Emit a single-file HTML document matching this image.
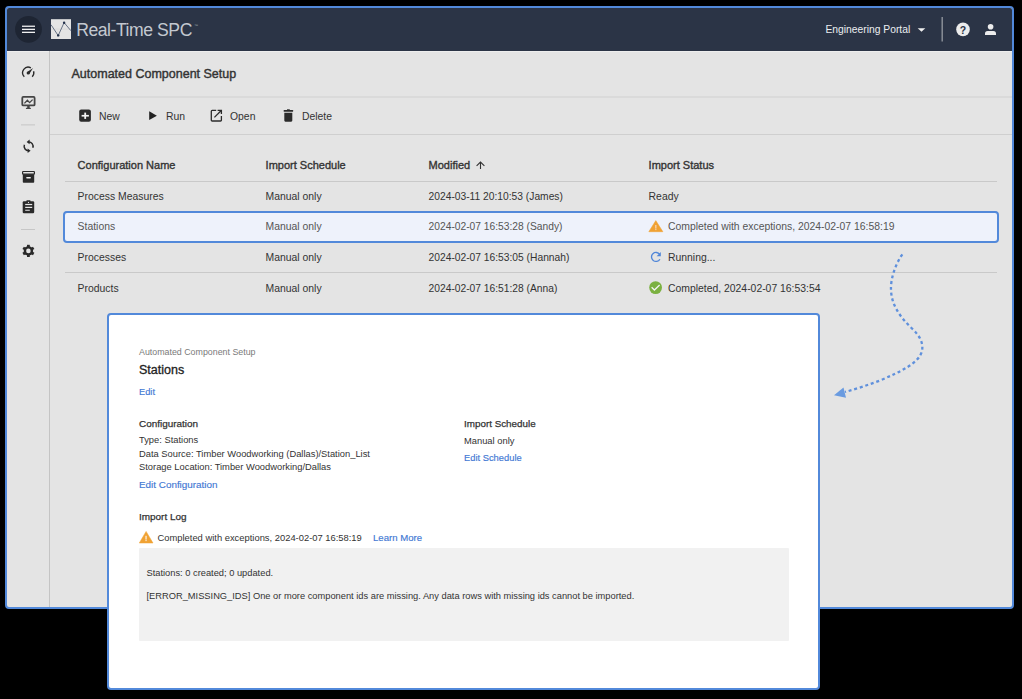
<!DOCTYPE html>
<html><head><meta charset="utf-8">
<style>
*{box-sizing:border-box;margin:0;padding:0}
html,body{width:1022px;height:699px;overflow:hidden;background:#000;font-family:"Liberation Sans",sans-serif;color:#333}
.a{position:absolute;white-space:nowrap}
svg.a{overflow:visible}
</style></head><body>
<div class="a" style="left:5px;top:6px;width:1009px;height:603px;background:#e4e4e4;border:2px solid #5289da;border-radius:4px"></div>
<div class="a" style="left:7px;top:8px;width:1005px;height:43px;background:#2b3446;border-radius:2px 2px 0 0"></div>
<svg class="a" style="left:0;top:0" width="80" height="50"><circle cx="28.5" cy="29.3" r="13.4" fill="#1e2533"/><rect x="22" y="25.6" width="13" height="1.3" fill="#f0f0f0"/><rect x="22" y="28.7" width="13" height="1.3" fill="#f0f0f0"/><rect x="22" y="31.7" width="13" height="1.3" fill="#f0f0f0"/><rect x="51" y="19.2" width="20" height="19.8" fill="#e4e4e4"/><line x1="51" y1="29.1" x2="71" y2="29.1" stroke="#d2d2d2" stroke-width="0.6"/><polyline points="51,24.7 58.2,35.6 64.1,22.6 71,30.8" fill="none" stroke="#46546c" stroke-width="0.8"/><circle cx="58.2" cy="35.4" r="1.2" fill="#23314a"/><circle cx="64.1" cy="22.8" r="1.2" fill="#23314a"/></svg>
<div class="a" style="left:76.20px;top:19.70px;font-size:17.6px;line-height:20px;font-weight:400;color:#c3c8d0;letter-spacing:-0.45px">Real-Time SPC</div>
<div class="a" style="left:194.00px;top:15.61px;font-size:4px;line-height:20px;font-weight:400;color:#9aa0a8;">&#8482;</div>
<div class="a" style="left:825.50px;top:20.13px;font-size:10.3px;line-height:20px;font-weight:400;color:#eceef1;">Engineering Portal</div>
<svg class="a" style="left:900px;top:10px" width="110" height="40"><polygon points="17.7,18.2 25.3,18.2 21.5,21.8" fill="#f0f0f0"/><rect x="41.5" y="7" width="1.4" height="24.5" fill="#8e939b"/><circle cx="63" cy="19.4" r="6.8" fill="#ececec"/><text x="63" y="23.6" font-family="Liberation Sans" font-weight="bold" font-size="10.5" text-anchor="middle" fill="#2b3446">?</text><circle cx="90.6" cy="16.8" r="2.8" fill="#ececec"/><path d="M85 25.1 V23.6 Q85 21 87.6 21 H93.4 Q96 21 96 23.6 V25.1 Z" fill="#ececec"/></svg>
<div class="a" style="left:7px;top:51px;width:1005px;height:1px;background:#eeeeee;"></div>
<div class="a" style="left:49px;top:51px;width:1px;height:556px;background:#c4c4c4;"></div>
<div class="a" style="left:71.50px;top:63.97px;font-size:12.5px;line-height:20px;font-weight:400;color:#333;-webkit-text-stroke:0.4px #333">Automated Component Setup</div>
<div class="a" style="left:50px;top:96px;width:962px;height:2px;background:#dadada;"></div>
<div class="a" style="left:99.00px;top:107.10px;font-size:10.4px;line-height:20px;font-weight:400;color:#333;">New</div>
<div class="a" style="left:166.00px;top:107.10px;font-size:10.4px;line-height:20px;font-weight:400;color:#333;">Run</div>
<div class="a" style="left:230.00px;top:107.10px;font-size:10.4px;line-height:20px;font-weight:400;color:#333;">Open</div>
<div class="a" style="left:302.00px;top:107.10px;font-size:10.4px;line-height:20px;font-weight:400;color:#333;">Delete</div>
<div class="a" style="left:50px;top:134px;width:962px;height:1px;background:#cfcfcf;"></div>
<div class="a" style="left:77.60px;top:155.19px;font-size:11px;line-height:20px;font-weight:400;color:#333;-webkit-text-stroke:0.35px #333">Configuration Name</div>
<div class="a" style="left:265.60px;top:155.19px;font-size:11px;line-height:20px;font-weight:400;color:#333;-webkit-text-stroke:0.35px #333">Import Schedule</div>
<div class="a" style="left:428.60px;top:155.19px;font-size:11px;line-height:20px;font-weight:400;color:#333;-webkit-text-stroke:0.35px #333">Modified</div>
<div class="a" style="left:648.60px;top:155.19px;font-size:11px;line-height:20px;font-weight:400;color:#333;-webkit-text-stroke:0.35px #333">Import Status</div>
<div class="a" style="left:65px;top:181px;width:932px;height:1px;background:#c9c9c9;"></div>
<div class="a" style="left:65px;top:211px;width:932px;height:1px;background:#c9c9c9;"></div>
<div class="a" style="left:65px;top:272px;width:932px;height:1px;background:#c9c9c9;"></div>
<div class="a" style="left:63px;top:211px;width:936px;height:32px;background:#eef2fb;border:2px solid #5289da;border-radius:4px"></div>
<div class="a" style="left:77.60px;top:187.10px;font-size:10.4px;line-height:20px;font-weight:400;color:#333;">Process Measures</div>
<div class="a" style="left:265.60px;top:187.10px;font-size:10.4px;line-height:20px;font-weight:400;color:#333;">Manual only</div>
<div class="a" style="left:428.60px;top:187.15px;font-size:10.25px;line-height:20px;font-weight:400;color:#333;">2024-03-11 20:10:53 (James)</div>
<div class="a" style="left:648.60px;top:187.10px;font-size:10.4px;line-height:20px;font-weight:400;color:#333;">Ready</div>
<div class="a" style="left:77.60px;top:217.30px;font-size:10.4px;line-height:20px;font-weight:400;color:#555;">Stations</div>
<div class="a" style="left:265.60px;top:217.30px;font-size:10.4px;line-height:20px;font-weight:400;color:#555;">Manual only</div>
<div class="a" style="left:428.60px;top:217.35px;font-size:10.25px;line-height:20px;font-weight:400;color:#555;">2024-02-07 16:53:28 (Sandy)</div>
<div class="a" style="left:668.00px;top:217.30px;font-size:10.4px;line-height:20px;font-weight:400;color:#555;">Completed with exceptions, 2024-02-07 16:58:19</div>
<div class="a" style="left:77.60px;top:248.30px;font-size:10.4px;line-height:20px;font-weight:400;color:#333;">Processes</div>
<div class="a" style="left:265.60px;top:248.30px;font-size:10.4px;line-height:20px;font-weight:400;color:#333;">Manual only</div>
<div class="a" style="left:428.60px;top:248.35px;font-size:10.25px;line-height:20px;font-weight:400;color:#333;">2024-02-07 16:53:05 (Hannah)</div>
<div class="a" style="left:668.00px;top:248.30px;font-size:10.4px;line-height:20px;font-weight:400;color:#333;">Running...</div>
<div class="a" style="left:77.60px;top:278.90px;font-size:10.4px;line-height:20px;font-weight:400;color:#333;">Products</div>
<div class="a" style="left:265.60px;top:278.90px;font-size:10.4px;line-height:20px;font-weight:400;color:#333;">Manual only</div>
<div class="a" style="left:428.60px;top:278.95px;font-size:10.25px;line-height:20px;font-weight:400;color:#333;">2024-02-07 16:51:28 (Anna)</div>
<div class="a" style="left:668.00px;top:278.90px;font-size:10.4px;line-height:20px;font-weight:400;color:#333;">Completed, 2024-02-07 16:53:54</div>
<div class="a" style="left:107px;top:313px;width:713px;height:377px;background:#ffffff;border:2px solid #5289da;border-radius:4px"></div>
<div class="a" style="left:139.00px;top:341.63px;font-size:8.85px;line-height:20px;font-weight:400;color:#7a7a7a;">Automated Component Setup</div>
<div class="a" style="left:139.00px;top:360.47px;font-size:12.5px;line-height:20px;font-weight:400;color:#222;-webkit-text-stroke:0.3px #222">Stations</div>
<div class="a" style="left:139.00px;top:382.28px;font-size:9.3px;line-height:20px;font-weight:400;color:#3f78d4;-webkit-text-stroke:0.15px #3f78d4">Edit</div>
<div class="a" style="left:139.00px;top:413.85px;font-size:9.95px;line-height:20px;font-weight:400;color:#333;-webkit-text-stroke:0.25px #333">Configuration</div>
<div class="a" style="left:139.00px;top:430.46px;font-size:9.35px;line-height:20px;font-weight:400;color:#333;">Type: Stations</div>
<div class="a" style="left:139.00px;top:443.86px;font-size:9.35px;line-height:20px;font-weight:400;color:#333;">Data Source: Timber Woodworking (Dallas)/Station_List</div>
<div class="a" style="left:139.00px;top:457.26px;font-size:9.35px;line-height:20px;font-weight:400;color:#333;">Storage Location: Timber Woodworking/Dallas</div>
<div class="a" style="left:139.00px;top:475.37px;font-size:9.9px;line-height:20px;font-weight:400;color:#3f78d4;-webkit-text-stroke:0.15px #3f78d4">Edit Configuration</div>
<div class="a" style="left:464.00px;top:413.89px;font-size:9.85px;line-height:20px;font-weight:400;color:#333;-webkit-text-stroke:0.25px #333">Import Schedule</div>
<div class="a" style="left:464.00px;top:430.56px;font-size:9.35px;line-height:20px;font-weight:400;color:#333;">Manual only</div>
<div class="a" style="left:464.00px;top:447.66px;font-size:9.35px;line-height:20px;font-weight:400;color:#3f78d4;-webkit-text-stroke:0.15px #3f78d4">Edit Schedule</div>
<div class="a" style="left:139.00px;top:506.95px;font-size:9.95px;line-height:20px;font-weight:400;color:#333;-webkit-text-stroke:0.25px #333">Import Log</div>
<div class="a" style="left:157.50px;top:528.44px;font-size:9.4px;line-height:20px;font-weight:400;color:#333;">Completed with exceptions, 2024-02-07 16:58:19</div>
<div class="a" style="left:373.00px;top:528.37px;font-size:9.6px;line-height:20px;font-weight:400;color:#3f78d4;-webkit-text-stroke:0.15px #3f78d4">Learn More</div>
<div class="a" style="left:139px;top:548px;width:650px;height:93px;background:#f1f1f1;border-radius:1px"></div>
<div class="a" style="left:146.50px;top:562.98px;font-size:9.3px;line-height:20px;font-weight:400;color:#333;">Stations: 0 created; 0 updated.</div>
<div class="a" style="left:146.50px;top:586.08px;font-size:9.3px;line-height:20px;font-weight:400;color:#333;">[ERROR_MISSING_IDS] One or more component ids are missing. Any data rows with missing ids cannot be imported.</div>
<svg class="a" style="left:0;top:0" width="1022" height="699"><rect x="79.2" y="109.4" width="11.7" height="12.4" rx="2" fill="#2b2b2b"/><rect x="81.6" y="114.9" width="7.3" height="1.7" fill="#f4f4f4"/><rect x="84.3" y="112.6" width="1.8" height="6.3" fill="#f4f4f4"/><polygon points="149.2,111.3 156.9,115.7 149.2,120.1" fill="#222"/><path d="M216.2 110.3 H212.2 Q211.3 110.3 211.3 111.2 V120.2 Q211.3 121 212.2 121 H220.5 Q221.4 121 221.4 120.2 V116" fill="none" stroke="#2b2b2b" stroke-width="1.3"/><path d="M214.4 117.4 L221 110.8" stroke="#2b2b2b" stroke-width="1.3"/><path d="M217.6 110.3 H221.4 V114" fill="none" stroke="#2b2b2b" stroke-width="1.3"/><rect x="283.7" y="110" width="9.4" height="1.8" rx="0.4" fill="#2b2b2b"/><rect x="287" y="109.3" width="2.8" height="1.2" fill="#2b2b2b"/><path d="M284.3 112.7 H292.3 V120.6 Q292.3 121.7 291.2 121.7 H285.4 Q284.3 121.7 284.3 120.6 Z" fill="#2b2b2b"/><path d="M480.5 162.2 V169 M476.6 165.8 L480.5 162 L484.4 165.8" fill="none" stroke="#333" stroke-width="1.1"/><path d="M24.3 76.7 A5.6 5.6 0 0 1 30.9 67.8" fill="none" stroke="#2a2a2a" stroke-width="1.35"/><path d="M33.6 71.2 A5.6 5.6 0 0 1 32.2 76.7" fill="none" stroke="#2a2a2a" stroke-width="1.35"/><polygon points="29.3,74.1 27.1,71.9 33.1,67.9" fill="#2a2a2a"/><circle cx="28.2" cy="73" r="1.6" fill="#2a2a2a"/><rect x="22.3" y="96.9" width="12.3" height="8.5" rx="1" fill="none" stroke="#454545" stroke-width="1.8"/><polyline points="24.4,103.4 27.4,100.2 29.6,102.6 32.6,99.6" fill="none" stroke="#454545" stroke-width="1.3"/><rect x="27.2" y="106" width="2.5" height="2" fill="#454545"/><rect x="25.9" y="107.8" width="5" height="1.2" rx="0.5" fill="#454545"/><rect x="21" y="124.4" width="14" height="1" fill="#c6c6c6"/><rect x="21" y="229" width="14" height="1" fill="#c6c6c6"/><path d="M28.3 141.9 A4.4 4.4 0 0 1 32.8 147.8" fill="none" stroke="#2a2a2a" stroke-width="1.5"/><polygon points="26.6,141.9 29.6,139.6 29.6,144.2" fill="#2a2a2a"/><path d="M24.4 144.8 A4.4 4.4 0 0 0 28.9 150.7" fill="none" stroke="#2a2a2a" stroke-width="1.5"/><polygon points="30.6,150.7 27.6,148.4 27.6,153" fill="#2a2a2a"/><rect x="22.6" y="171.5" width="11.8" height="2.6" rx="0.6" fill="none" stroke="#2a2a2a" stroke-width="1.2"/><path d="M22.8 174.2 H34.2 V182 Q34.2 182.7 33.5 182.7 H23.5 Q22.8 182.7 22.8 182 Z" fill="#2a2a2a"/><rect x="26.2" y="176.9" width="4.7" height="1.5" rx="0.7" fill="#f0f0f0"/><rect x="22.7" y="201.2" width="11.5" height="12" rx="1.2" fill="#2a2a2a"/><rect x="26.3" y="200.2" width="4.3" height="2" rx="0.8" fill="#2a2a2a"/><circle cx="28.5" cy="202.4" r="0.6" fill="#e0e0e0"/><rect x="25.2" y="203.9" width="7" height="1.2" fill="#e8e8e8"/><rect x="25.2" y="206.8" width="7" height="1.2" fill="#e8e8e8"/><rect x="25.2" y="209.7" width="4.6" height="1.2" fill="#c8c8c8"/><g transform="translate(28.4 250.9)" fill="#2a2a2a"><circle r="4.7"/><rect x="-1.4" y="-6.1" width="2.8" height="3" transform="rotate(0)"/><rect x="-1.4" y="-6.1" width="2.8" height="3" transform="rotate(60)"/><rect x="-1.4" y="-6.1" width="2.8" height="3" transform="rotate(120)"/><rect x="-1.4" y="-6.1" width="2.8" height="3" transform="rotate(180)"/><rect x="-1.4" y="-6.1" width="2.8" height="3" transform="rotate(240)"/><rect x="-1.4" y="-6.1" width="2.8" height="3" transform="rotate(300)"/><circle r="2.3" fill="#e4e4e4"/></g><polygon points="655.8,220.6 662.9,231.7 648.8,231.7" fill="#f0a233" stroke="#f0a233" stroke-width="0.5" stroke-linejoin="round"/><rect x="655.1" y="225" width="1.4" height="3.6" fill="#f6cfa8"/><rect x="655.1" y="229.1" width="1.4" height="1" fill="#f6cfa8"/><path d="M659.7 254.4 A4.5 4.5 0 1 0 659.9 259.2" fill="none" stroke="#5086d8" stroke-width="1.3"/><polygon points="660.8,252.1 660.8,256.3 656.6,256.3" fill="#5086d8"/><circle cx="655.6" cy="287.6" r="6.4" fill="#7bb141"/><polyline points="651.6,287.3 654.4,290 659.6,285" fill="none" stroke="#f4f4f4" stroke-width="1.3"/><polygon points="146.1,531.4 153,543 139.3,543" fill="#f0a233" stroke="#f0a233" stroke-width="0.5" stroke-linejoin="round"/><rect x="145.3" y="535.8" width="1.5" height="3.8" fill="#fbe3c6"/><rect x="145.3" y="540.1" width="1.5" height="1" fill="#fbe3c6"/><path d="M902.3 254.3 C895 265, 890.5 279, 891 290 C891.5 305, 900 317, 912 328.5 C920 336, 923.5 343, 922 351 C919 363, 902 371, 880 380.5 C868 385, 856 389, 845 392" fill="none" stroke="#5f90dc" stroke-width="2.3" stroke-dasharray="3 2.8"/><polygon points="834,395.3 843.5,387.5 846,397.8" fill="#6a9be0"/></svg>
</body></html>
